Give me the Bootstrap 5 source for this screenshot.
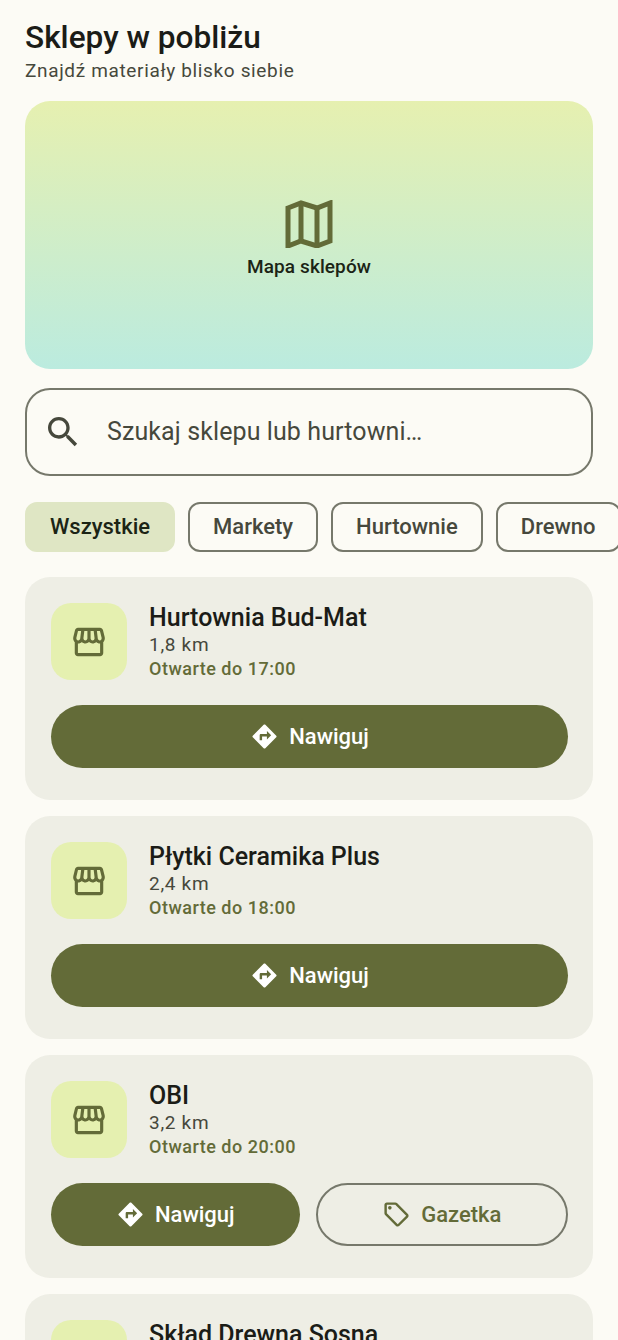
<!DOCTYPE html>
<html lang="pl">
<head>
  <meta charset="UTF-8">
  <title>Sklepy w pobliżu</title>
  <link href="https://cdn.jsdelivr.net/npm/bootstrap@5.3.0/dist/css/bootstrap.min.css" rel="stylesheet">
  <style>
    html, body { height: 1340px; overflow: hidden; }
    body { background: #fcfbf5; font-family: Roboto, "Liberation Sans", sans-serif; color: #1b1c17; }
    .page-wrap { padding: 19px 25px 0; }
    .page-title { font-size: 31.6px; line-height: 38px; font-weight: 500; margin: 0; }
    .page-sub { font-size: 19px; line-height: 28px; letter-spacing: .65px; color: #46483c; margin: 0 0 16px; }
    .map-hero { height: 268px; border-radius: 25px; background: linear-gradient(180deg, #e6f0b0, #bbebdf); margin-bottom: 19px; padding-top: 10px; }
    .map-hero svg { width: 48px; height: 48px; margin-bottom: 6px; }
    .map-label { font-size: 19px; line-height: 26px; font-weight: 500; letter-spacing: .1px; color: #1b2415; }
    .search-box { height: 88px; border: 2px solid #76786b; border-radius: 25px; padding: 0 16px; gap: 24px; margin-bottom: 26px; }
    .search-box svg { width: 40px; height: 40px; fill: #46483c; flex: none; }
    .search-box input { font-size: 25px; letter-spacing: .1px; color: #46483c; background: transparent; border: 0; padding: 0; box-shadow: none; }
    .search-box input::placeholder { color: #46483c; opacity: 1; }
    .chip-row { gap: 13px; margin-right: -25px; margin-bottom: 25px; overflow: hidden; }
    .chip-btn { height: 50px; flex: none; font-size: 22px; font-weight: 500; line-height: 1; padding: 0 23px; border-radius: 12px; border: 2px solid #76786b; color: #46483c; background: transparent; }
    .chip-btn.on { background: #dfe6c4; border-color: #dfe6c4; color: #1b2415; }
    .shop-card { background: #eeeee5; border-radius: 25px; padding: 26px 25px 32px 26px; margin-bottom: 16px; height: 223px; flex: none; }
    .shop-thumb { width: 76px; height: 77px; border-radius: 20px; background: #e5f0b0; flex: none; }
    .shop-thumb svg { width: 38px; height: 38px; fill: #636b38; }
    .shop-top { gap: 22px; margin-bottom: 24px; }
    .shop-name { font-size: 25px; line-height: 30px; font-weight: 500; margin: 0; }
    .shop-dist { font-size: 19px; line-height: 24px; letter-spacing: .7px; color: #46483c; }
    .shop-open { font-size: 18px; line-height: 24px; font-weight: 500; letter-spacing: .5px; color: #636b38; }
    .act-row { gap: 16px; }
    .act-btn { height: 63px; font-size: 22px; font-weight: 500; gap: 10px; border-radius: 32px; flex: 1 1 0; }
    .act-btn svg { width: 29px; height: 29px; flex: none; fill: currentColor; }
    .act-fill, .act-fill:hover { background: #636b38; border: 0; color: #fff; }
    .act-line, .act-line:hover { background: transparent; border: 2px solid #76786b; color: #636b38; }
  </style>
</head>
<body>
  <div class="page-wrap">
    <h1 class="page-title">Sklepy w pobliżu</h1>
    <p class="page-sub">Znajdź materiały blisko siebie</p>

    <div class="map-hero d-flex flex-column align-items-center justify-content-center">
      <svg viewBox="0 0 48 48" fill="none" stroke="#636b38" stroke-width="5" stroke-linejoin="miter">
        <path d="M3 8L16 3L32 8L45 3V41L32 46L16 41L3 46Z"/>
        <path d="M16 3V41M32 8V46"/>
      </svg>
      <div class="map-label">Mapa sklepów</div>
    </div>

    <div class="search-box d-flex align-items-center">
      <svg viewBox="0 0 24 24"><path d="M15.5 14h-.79l-.28-.27C15.41 12.59 16 11.11 16 9.5 16 5.91 13.09 3 9.5 3S3 5.91 3 9.5 5.91 16 9.5 16c1.61 0 3.09-.59 4.23-1.57l.27.28v.79l5 4.99L20.49 19l-4.99-5zm-6 0C7.01 14 5 11.99 5 9.5S7.01 5 9.5 5 14 7.01 14 9.5 11.99 14 9.5 14z"/></svg>
      <input class="form-control" type="text" placeholder="Szukaj sklepu lub hurtowni…">
    </div>

    <div class="chip-row d-flex">
      <button class="btn chip-btn on">Wszystkie</button>
      <button class="btn chip-btn">Markety</button>
      <button class="btn chip-btn">Hurtownie</button>
      <button class="btn chip-btn">Drewno</button>
    </div>

    <svg width="0" height="0" class="d-block">
      <defs>
        <symbol id="ic-store" viewBox="0 0 24 24"><path d="M21.9 8.89l-1.05-4.37c-.22-.9-1-1.52-1.91-1.52H5.05c-.9 0-1.69.63-1.9 1.52L2.1 8.89c-.24 1.02-.02 2.06.62 2.88.08.11.19.19.28.29V19c0 1.1.9 2 2 2h14c1.1 0 2-.9 2-2v-6.94c.09-.09.2-.18.28-.28.64-.82.87-1.87.62-2.89zm-2.99-3.9l1.05 4.37c.1.42.01.84-.25 1.17-.14.18-.44.47-.94.47-.61 0-1.14-.49-1.21-1.14L16.98 5l1.93-.01zM13 5h1.96l.54 4.52c.05.39-.07.78-.33 1.07-.22.26-.54.41-.95.41-.67 0-1.22-.59-1.22-1.31V5zM8.49 9.52L9.04 5H11v4.69c0 .72-.55 1.31-1.29 1.31-.34 0-.65-.15-.89-.41-.25-.29-.37-.68-.33-1.07zm-4.45-.16L5.05 5h1.97l-.58 4.86c-.08.65-.6 1.14-1.21 1.14-.49 0-.8-.29-.93-.47-.27-.32-.36-.75-.26-1.17zM5 19v-6.03c.08.01.15.03.23.03.87 0 1.66-.36 2.24-.95.6.6 1.4.95 2.31.95.87 0 1.65-.36 2.23-.93.59.57 1.39.93 2.29.93.84 0 1.64-.35 2.24-.95.58.59 1.37.95 2.24.95.08 0 .15-.02.23-.03V19H5z"/></symbol>
        <symbol id="ic-nav" viewBox="0 0 24 24"><path d="M21.71 11.29l-9-9c-.39-.39-1.02-.39-1.41 0l-9 9c-.39.39-.39 1.02 0 1.41l9 9c.39.39 1.02.39 1.41 0l9-9c.39-.38.39-1.01 0-1.41zM14 14.5V12h-4v3H8v-4c0-.55.45-1 1-1h5V7.5l3.5 3.5-3.5 3.5z"/></symbol>
        <symbol id="ic-tag" viewBox="0 0 24 24"><path d="M21.41 11.58l-9-9C12.05 2.22 11.55 2 11 2H4c-1.1 0-2 .9-2 2v7c0 .55.22 1.05.59 1.42l9 9c.36.36.86.58 1.41.58.55 0 1.05-.22 1.41-.59l7-7c.37-.36.59-.86.59-1.41 0-.55-.23-1.06-.59-1.42zM13 20.01L4 11V4h7v-.01l9 8.99-7 7.02z"/><circle cx="6.5" cy="6.5" r="1.5"/></symbol>
      </defs>
    </svg>

    <div class="shop-card">
      <div class="shop-top d-flex">
        <div class="shop-thumb d-flex align-items-center justify-content-center"><svg><use href="#ic-store"/></svg></div>
        <div>
          <h2 class="shop-name">Hurtownia Bud-Mat</h2>
          <div class="shop-dist">1,8 km</div>
          <div class="shop-open">Otwarte do 17:00</div>
        </div>
      </div>
      <div class="act-row d-flex">
        <button class="btn act-btn act-fill d-flex align-items-center justify-content-center"><svg><use href="#ic-nav"/></svg>Nawiguj</button>
      </div>
    </div>

    <div class="shop-card">
      <div class="shop-top d-flex">
        <div class="shop-thumb d-flex align-items-center justify-content-center"><svg><use href="#ic-store"/></svg></div>
        <div>
          <h2 class="shop-name">Płytki Ceramika Plus</h2>
          <div class="shop-dist">2,4 km</div>
          <div class="shop-open">Otwarte do 18:00</div>
        </div>
      </div>
      <div class="act-row d-flex">
        <button class="btn act-btn act-fill d-flex align-items-center justify-content-center"><svg><use href="#ic-nav"/></svg>Nawiguj</button>
      </div>
    </div>

    <div class="shop-card">
      <div class="shop-top d-flex">
        <div class="shop-thumb d-flex align-items-center justify-content-center"><svg><use href="#ic-store"/></svg></div>
        <div>
          <h2 class="shop-name">OBI</h2>
          <div class="shop-dist">3,2 km</div>
          <div class="shop-open">Otwarte do 20:00</div>
        </div>
      </div>
      <div class="act-row d-flex">
        <button class="btn act-btn act-fill d-flex align-items-center justify-content-center"><svg><use href="#ic-nav"/></svg>Nawiguj</button>
        <button class="btn act-btn act-line d-flex align-items-center justify-content-center"><svg><use href="#ic-tag"/></svg>Gazetka</button>
      </div>
    </div>

    <div class="shop-card">
      <div class="shop-top d-flex">
        <div class="shop-thumb d-flex align-items-center justify-content-center"><svg><use href="#ic-store"/></svg></div>
        <div>
          <h2 class="shop-name">Skład Drewna Sosna</h2>
        </div>
      </div>
    </div>
  </div>
  <script src="https://cdn.jsdelivr.net/npm/bootstrap@5.3.0/dist/js/bootstrap.bundle.min.js"></script>
</body>
</html>
